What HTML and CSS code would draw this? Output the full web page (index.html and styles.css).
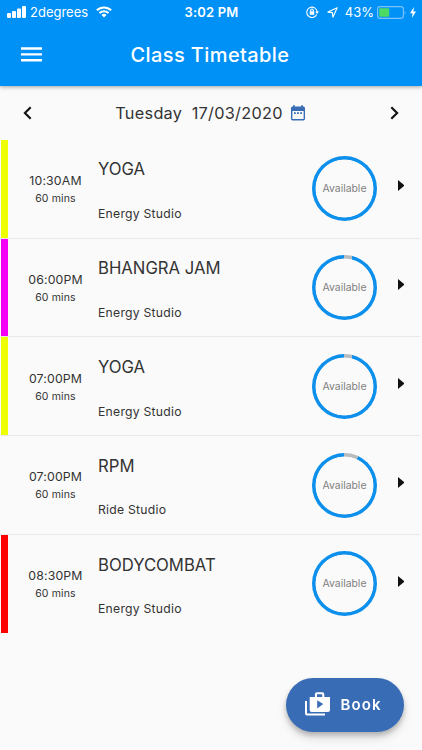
FILE: index.html
```html
<!DOCTYPE html>
<html lang="en">
<head>
  <meta charset="UTF-8">
  <meta name="viewport" content="width=device-width, initial-scale=1.0">
  <title>Class Timetable</title>
  <link rel="stylesheet" href="styles.css">
</head>
<body>
  <header class="header">
    <div class="status">
      <div class="status__left">
        <svg class="signal" width="19" height="12" viewBox="0 0 19 12" fill="#fff">
          <rect x="0" y="7" width="4" height="5" rx="1"/>
          <rect x="5" y="5" width="4" height="7" rx="1"/>
          <rect x="10" y="2.5" width="4" height="9.5" rx="1"/>
          <rect x="15" y="0" width="4" height="12" rx="1"/>
        </svg>
        <span class="carrier">2degrees</span>
        <svg class="wifi" width="16" height="12" viewBox="0 0 16 12" fill="none" stroke="#fff" stroke-width="2">
          <path d="M.9 4.3a10.2 10.2 0 0 1 14.2 0"/>
          <path d="M3.4 7a6.6 6.6 0 0 1 9.2 0"/>
          <path d="M8 11.6 5.5 9a3.6 3.6 0 0 1 5 0z" fill="#fff" stroke="none"/>
        </svg>
      </div>
      <div class="status__time">3:02 PM</div>
      <div class="status__right">
        <svg class="lock" width="13" height="12" viewBox="0 0 13 12" fill="none" stroke="#fff" stroke-width="1.1">
          <path d="M10.7 8.6A5.2 5.2 0 1 1 11.2 6"/>
          <path d="M9.3 5.5h3.6l-1.8 2.4z" fill="#fff" stroke="none"/>
          <rect x="3.7" y="5.3" width="4.6" height="3.5" rx=".4" fill="#fff" stroke="none"/>
          <path d="M4.7 5.5V4.3a1.3 1.3 0 0 1 2.6 0v1.2"/>
        </svg>
        <svg class="location" width="11" height="11" viewBox="0 0 11 11" fill="none" stroke="#fff" stroke-width="1.1" stroke-linejoin="round">
          <path d="M10.2.8.9 5.1l4.5.5.5 4.6z"/>
        </svg>
        <span class="percent">43%</span>
        <svg class="battery" width="30" height="13" viewBox="0 0 30 13">
          <rect x=".6" y=".6" width="25.8" height="11.8" rx="2.6" fill="none" stroke="#7cc3fa" stroke-width="1.1"/>
          <rect x="2.2" y="2.2" width="10" height="8.6" rx="1" fill="#4cd964"/>
          <path d="M27.7 4.5q1.6 2 0 4z" fill="#7cc3fa"/>
        </svg>
        <svg class="bolt" width="6" height="11" viewBox="0 0 6 11" fill="#fff">
          <path d="M4 0 0 6.2h2.6L1.8 11 6 4.6H3.4z"/>
        </svg>
      </div>
    </div>
    <div class="toolbar">
      <svg class="menu" width="21" height="15" viewBox="0 0 21 15" fill="#fff">
        <path d="M0 .3h21v2.4H0zM0 6.2h21v2.4H0zM0 12.1h21v2.4H0z"/>
      </svg>
      <h1 class="toolbar__title">Class Timetable</h1>
    </div>
  </header>

  <div class="date-bar">
    <svg class="chevron" width="9" height="14" viewBox="0 0 9 14" fill="none" stroke="#151515" stroke-width="2.2">
      <path d="M7.7 1.2 1.9 7l5.8 5.8"/>
    </svg>
    <div class="date">
      <span class="date__day">Tuesday</span>
      <span class="date__value">17/03/2020</span>
      <svg class="date__icon" width="14" height="16" viewBox="0 0 14 16">
        <path fill="#386cb5" fill-rule="evenodd" d="M1.6 1.6H2V.3h1.8v1.3h6.4V.3H12v1.3h.4A1.6 1.6 0 0 1 14 3.2v10.6a1.6 1.6 0 0 1-1.6 1.6H1.6A1.6 1.6 0 0 1 0 13.8V3.2a1.6 1.6 0 0 1 1.6-1.6zM1.4 5.9V14h11.2V5.9zM3 7.3h1.8v1.6H3zm3.1 0h1.8v1.6H6.1zm3.1 0H11v1.6H9.2z"/>
      </svg>
    </div>
    <svg class="chevron" width="9" height="14" viewBox="0 0 9 14" fill="none" stroke="#151515" stroke-width="2.2">
      <path d="M1.3 1.2 7.1 7l-5.8 5.8"/>
    </svg>
  </div>

  <main class="classes">
    <div class="class">
      <div class="class__bar class__bar--yellow"></div>
      <div class="class__time"><span class="class__start">10:30AM</span><span class="class__length">60 mins</span></div>
      <div class="class__info"><span class="class__name">YOGA</span><span class="class__studio">Energy Studio</span></div>
      <div class="ring"><span class="ring__label">Available</span></div>
      <div class="arrow"></div>
    </div>
    <div class="class">
      <div class="class__bar class__bar--magenta"></div>
      <div class="class__time"><span class="class__start">06:00PM</span><span class="class__length">60 mins</span></div>
      <div class="class__info"><span class="class__name">BHANGRA JAM</span><span class="class__studio">Energy Studio</span></div>
      <div class="ring" style="--booked: 4%"><span class="ring__label">Available</span></div>
      <div class="arrow"></div>
    </div>
    <div class="class">
      <div class="class__bar class__bar--yellow"></div>
      <div class="class__time"><span class="class__start">07:00PM</span><span class="class__length">60 mins</span></div>
      <div class="class__info"><span class="class__name">YOGA</span><span class="class__studio">Energy Studio</span></div>
      <div class="ring" style="--booked: 4%"><span class="ring__label">Available</span></div>
      <div class="arrow"></div>
    </div>
    <div class="class">
      <div class="class__bar"></div>
      <div class="class__time"><span class="class__start">07:00PM</span><span class="class__length">60 mins</span></div>
      <div class="class__info"><span class="class__name">RPM</span><span class="class__studio">Ride Studio</span></div>
      <div class="ring" style="--booked: 7%"><span class="ring__label">Available</span></div>
      <div class="arrow"></div>
    </div>
    <div class="class">
      <div class="class__bar class__bar--red"></div>
      <div class="class__time"><span class="class__start">08:30PM</span><span class="class__length">60 mins</span></div>
      <div class="class__info"><span class="class__name">BODYCOMBAT</span><span class="class__studio">Energy Studio</span></div>
      <div class="ring"><span class="ring__label">Available</span></div>
      <div class="arrow"></div>
    </div>
  </main>

  <button class="book">
    <svg class="book__icon" width="25" height="24" viewBox="0 0 25 24">
      <path fill="#fff" fill-rule="evenodd" d="M0 9h2v12.6h18v2H2a2 2 0 0 1-2-2zM4.7 5h5.2V2.2a2 2 0 0 1 2-2h5.4a2 2 0 0 1 2 2V5H25v13a2 2 0 0 1-2 2H6.7a2 2 0 0 1-2-2zM12 2.3V5h5.2V2.3zM12.2 8.2v8.2l6-4.3z"/>
    </svg>
    <span class="book__label">Book</span>
  </button>
</body>
</html>
```
FILE: styles.css
```css
* {
  margin: 0;
  padding: 0;
  box-sizing: border-box;
}

body {
  height: 750px;
  font-family: Inter, "Liberation Sans", sans-serif;
  background-color: #fafafa;
  color: #333;
  overflow: hidden;
}

svg {
  display: block;
  flex: none;
}

/* Header */
.header {
  height: 85.5px;
  background-color: #0091f7;
  color: #fff;
  box-shadow: 0 1px 4px rgba(0, 0, 0, 0.35);
}

.status {
  display: grid;
  grid-template-columns: 1fr auto 1fr;
  height: 24px;
  padding: 0 6px 0 7px;
  font-size: 13px;
  line-height: 24px;
}

.status__left,
.status__right {
  display: flex;
  align-items: center;
}

.status__right {
  justify-content: flex-end;
}

.carrier {
  margin: 0 8px 0 4px;
}

.status__time {
  font-weight: 600;
  letter-spacing: 0.2px;
}

.location {
  margin: 0 7px 0 8px;
}

.percent {
  margin-right: 3px;
}

.bolt {
  margin-left: 3px;
}

.toolbar {
  display: flex;
  align-items: center;
  height: 61px;
  padding-left: 21px;
}

.toolbar__title {
  margin-left: 88.5px;
  font-size: 20px;
  font-weight: 550;
  line-height: 24px;
  letter-spacing: 0.4px;
}

/* Date picker */
.date-bar {
  display: flex;
  align-items: center;
  justify-content: space-between;
  height: 54.2px;
  padding: 0 23px 0 23px;
}

.date {
  display: flex;
  align-items: center;
  padding-right: 2px;
  font-size: 16.3px;
  line-height: 24px;
  letter-spacing: 0.27px;
}

.date__day {
  margin-right: 9.5px;
}

.date__icon {
  margin-left: 8px;
}

/* Class list */
.class {
  display: flex;
  height: 98.85px;
  margin: 0 2px 0 1px;
  border-bottom: 1px solid #e9e9e9;
}

.class:last-child {
  height: 93px;
  height: 98px;
  border-bottom: 0;
}

.class__bar {
  width: 7px;
}

.class__bar--yellow {
  background-color: #eeff00;
}

.class__bar--magenta {
  background-color: #f500f5;
}

.class__bar--red {
  background-color: #ff0000;
}

.class__time {
  display: flex;
  flex-direction: column;
  align-items: center;
  width: 90px;
  padding: 32.2px 0 0 5px;
}

.class__start {
  font-size: 12.3px;
  line-height: 18px;
  letter-spacing: 0.15px;
}

.class__length {
  font-size: 10.5px;
  line-height: 17px;
  letter-spacing: 0.15px;
}

.class__info {
  display: flex;
  flex: 1;
  flex-direction: column;
  padding-top: 19.7px;
}

.class__name {
  font-size: 16.7px;
  line-height: 20px;
}

.class__studio {
  margin-top: 26.5px;
  font-size: 12.2px;
  line-height: 16px;
  letter-spacing: 0.25px;
}

/* Availability ring, the booked share is grey */
.ring {
  display: flex;
  align-items: center;
  justify-content: center;
  width: 65px;
  height: 65px;
  margin: 16.4px 21px 0 0;
  border-radius: 50%;
  background: radial-gradient(closest-side, #fafafa 28.6px, transparent 29.3px),
    conic-gradient(#b8bcbf var(--booked, 0%), #0d8fec 0);
}

.ring__label {
  font-size: 10.4px;
  color: #808080;
}

.arrow {
  height: 11px;
  margin: 40.5px 16px 0 0;
  border: solid transparent;
  border-width: 5.5px 0 5.5px 6px;
  border-left-color: #111;
}

/* Floating button */
.book {
  position: fixed;
  right: 18px;
  bottom: 18.5px;
  display: flex;
  align-items: center;
  width: 118px;
  height: 54px;
  padding: 0 0 1px 18.5px;
  border: 0;
  border-radius: 27px;
  background-color: #386cb5;
  box-shadow: 0 3px 5px rgba(0, 0, 0, 0.2), 0 6px 10px rgba(0, 0, 0, 0.14);
  color: #fff;
  font-family: inherit;
}

.book__label {
  margin-left: 11px;
  padding-top: 1px;
  font-size: 15px;
  font-weight: 600;
  letter-spacing: 1.1px;
}
```
